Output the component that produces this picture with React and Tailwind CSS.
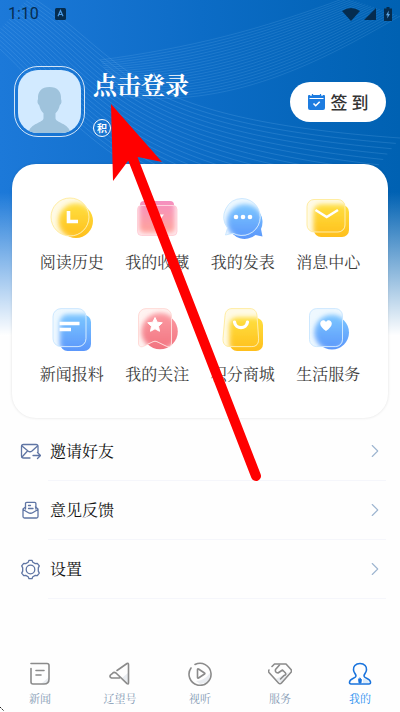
import { Fragment } from 'react';
import { ChevronRight } from 'lucide-react';

const range = (n) => Array.from({ length: n }, (_, i) => i);

// every wave is a blend between the first and the last curve of its family
const waveFamilies = [
  { count: 20, from: [30, -4, 130, 60, 120, 118, 400, 138], to: [-10, 40, 70, 110, 90, 180, 320, 240], opacity: 0.18 },
  { count: 20, from: [100, 60, 190, 48, 260, 30, 345, -2], to: [120, 96, 230, 110, 320, 62, 400, 16], opacity: 0.15 },
];

function wavePath(from, to, t) {
  const p = from.map((v, i) => Math.round((v + (to[i] - v) * t) * 10) / 10);
  return `M${p[0]} ${p[1]}C${p[2]} ${p[3]} ${p[4]} ${p[5]} ${p[6]} ${p[7]}`;
}

const tones = {
  yellow: { top: '#ffdf3f', bottom: '#ffbf1c', glass: '#fffae6', edge: '#ffe98f' },
  pink: { top: '#f590c0', bottom: '#ffa39a', glass: '#ffe9ee', edge: '#ffc9d2' },
  red: { top: '#fb9aa2', bottom: '#f27480', glass: '#fff3f1', edge: '#ffd3cf' },
  blue: { top: '#7cc6ff', bottom: '#5b97fb', glass: '#eef8ff', edge: '#c3e3ff' },
};

const services = [
  {
    id: 'history', label: '阅读历史', tone: 'yellow',
    back: <circle cx="28" cy="25" r="17" />,
    front: <circle cx="22" cy="21" r="19" />,
    glyph: <path d="M20.5 15v10.5H30" fill="none" stroke="#fff" strokeWidth="3.6" />,
  },
  {
    id: 'favorites', label: '我的收藏', tone: 'pink',
    back: <rect x="7" y="5" width="34" height="31" rx="4" />,
    front: <rect x="4.5" y="9.5" width="39.5" height="30" rx="4" />,
    glyph: <path d="M18.500 18.500h12.500l-6.200 8z" fill="#fff" />,
  },
  {
    id: 'posts', label: '我的发表', tone: 'blue',
    back: <path d="M27 9a17 17 0 0 1 15 24l1.500 7.500-7-1.500A17 17 0 1 1 27 9z" />,
    front: <path d="M23 2.500a18.500 18.500 0 1 1-9 34.800L6.500 39l2-7A18.500 18.500 0 0 1 23 2.500z" />,
    glyph: <g fill="#fff"><circle cx="17" cy="21" r="2.300" /><circle cx="24" cy="21" r="2.300" /><circle cx="31" cy="21" r="2.300" /></g>,
  },
  {
    id: 'messages', label: '消息中心', tone: 'yellow',
    back: <rect x="10" y="9" width="35" height="32" rx="7" />,
    front: <rect x="3" y="3.5" width="38" height="32.5" rx="7" />,
    glyph: <path d="M11.500 14l11.200 7L34 14" fill="none" stroke="#fff" strokeWidth="2.600" />,
  },
  {
    id: 'tips', label: '新闻报料', tone: 'blue',
    back: <rect x="12.5" y="7" width="30.500" height="36" rx="7" />,
    front: <rect x="5" y="0.600" width="33" height="38" rx="8" />,
    glyph: <path d="M11.500 15.500h20M11.500 21.500H23" fill="none" stroke="#fff" strokeWidth="3.300" />,
  },
  {
    id: 'follows', label: '我的关注', tone: 'red',
    back: <circle cx="27" cy="23.500" r="17.800" />,
    front: <path d="M13 .6h18a7.500 7.500 0 0 1 7.500 7.500v27c0 3-2 4.500-5 3.200l-9.500-4.600q-2-1-4 0l-9.500 4.600c-3 1.300-5-.2-5-3.200v-27A7.500 7.500 0 0 1 13 .6z" />,
    glyph: <path d="M22 9.500l2.200 4.700 5.100.6-3.800 3.500 1 5-4.500-2.500-4.500 2.500 1-5-3.800-3.500 5.100-.6z" fill="#fff" stroke="#fff" strokeLinejoin="round" />,
  },
  {
    id: 'points', label: '积分商城', tone: 'yellow',
    back: <rect x="11" y="10" width="33" height="33" rx="7" />,
    front: <path d="M13 .6h18c4 0 6.600 2.600 7 7l1.600 23c.2 5-2 8-7 8H11c-5 0-7.200-3-7-8l2-23c.4-4.400 3-7 7-7z" />,
    glyph: <path d="M15.500 14c1 7.500 12 7.500 13 0" fill="none" stroke="#fff" strokeWidth="3.200" strokeLinecap="round" />,
  },
  {
    id: 'life', label: '生活服务', tone: 'blue',
    back: <circle cx="28" cy="24.500" r="17" />,
    front: <rect x="5.500" y="0.600" width="33" height="38" rx="7" />,
    glyph: <path d="M22 23c-3.500-2.600-5.800-4.800-5.800-7.300 0-3.500 4.200-4.600 5.800-1.700 1.600-2.900 5.800-1.800 5.800 1.700 0 2.500-2.300 4.700-5.800 7.300z" fill="#fff" />,
  },
];

function GlassIcon({ id, tone, back, front, glyph }) {
  const { top, bottom, glass, edge } = tones[tone];
  return (
    <svg viewBox="0 0 48 48" className="size-12" aria-hidden="true">
      <defs>
        <linearGradient id={`${id}-fill`} x1="0" y1="0" x2="0" y2="1">
          <stop offset="0" stopColor={top} />
          <stop offset="1" stopColor={bottom} />
        </linearGradient>
        <filter id={`${id}-blur`} x="-30%" y="-30%" width="160%" height="160%">
          <feGaussianBlur stdDeviation="2.6" />
        </filter>
        <clipPath id={`${id}-front`}>{front}</clipPath>
        <clipPath id={`${id}-back`}>{back}</clipPath>
      </defs>
      <g fill={`url(#${id}-fill)`}>{back}</g>
      <g clipPath={`url(#${id}-front)`}>
        <rect width="48" height="48" fill={glass} />
        <g fill={`url(#${id}-fill)`} filter={`url(#${id}-blur)`}>{back}</g>
        <g fill={`url(#${id}-fill)`} fillOpacity="0.4" filter={`url(#${id}-blur)`}>{back}</g>
      </g>
      <g fill="none" stroke={edge} strokeOpacity="0.8">{front}</g>
      <g fill="none" stroke="#fff" strokeOpacity="0.3" clipPath={`url(#${id}-back)`}>{front}</g>
      {glyph}
    </svg>
  );
}

const menuItems = [
  {
    label: '邀请好友',
    icon: (
      <>
        <path d="M10 17H3.500Q1.500 17 1.500 15V5.500Q1.500 3.500 3.500 3.500h12.500q2 0 2 2V11" />
        <path d="M2 5l6 5q2 1.500 4 0l5.500-5M2 16l5-5.500M13 14.500h7M17.500 11.500l3 3-3 3" />
      </>
    ),
  },
  {
    label: '意见反馈',
    icon: (
      <>
        <path d="M5.500 9V3.500q0-1.200 1.200-1.200h8q1.200 0 1.200 1.200V9M8.500 5.500h2M8.500 8.500h4.500" />
        <path d="M5.500 7L3 9v7.500Q3 18 4.500 18h12q1.500 0 1.500-1.500V9l-2.500-2M3 9.500l5 3q2.500 1.500 5 0l5-3" />
      </>
    ),
  },
  {
    label: '设置',
    icon: (
      <>
        <circle cx="10.500" cy="10.500" r="4.300" />
        <path d="M8.200 3.200L9 1.300h3l.8 1.900 2.500 1.400 2-.3 2 2.600-1 2v3.200l1 2-2 2.600-2-.3-2.500 1.400-.8 1.900H9l-.8-1.900-2.500-1.400-2 .3-2-2.600 1-2V8.900l-1-2 2-2.600 2 .3z" />
      </>
    ),
  },
];

const tabs = [
  {
    label: '新闻',
    icon: (
      <>
        <path d="M13 23l8-7v5q0 2-2 2z" fill="#e9ecf0" stroke="none" />
        <path d="M3 2.500h16q2 0 2 2V18q0 5-5 5H5q-2 0-2-2V7.500M8 9.500h8M8 14h5" />
      </>
    ),
  },
  {
    label: '辽望号',
    icon: (
      <>
        <path d="M14 17l7-6v12z" fill="#e9ecf0" stroke="none" />
        <path d="M9 9.500l10-7q1.500-.8 1.500 1v18.500q0 1.500-1.500.6L8 12q-2-1.300-3.500.3L2.500 14q-1.500 2.200 1 3h8" />
      </>
    ),
  },
  {
    label: '视听',
    icon: (
      <>
        <path d="M8 20q8 0 14-8 1 10-10 11z" fill="#e9ecf0" stroke="none" />
        <path d="M7 3.500A11 11 0 1 1 3 7M9.500 8.500v8q0 1 1 .5l6-4q.8-.5 0-1l-6-4q-1-.5-1 .5z" />
      </>
    ),
  },
  {
    label: '服务',
    icon: (
      <>
        <path d="M8 18l13-7-8 11z" fill="#e9ecf0" stroke="none" />
        <path d="M4 5.500L6.500 3H18l5 5.500q1 1.500 0 2.800L13.500 22q-1.500 1.500-3 0L1 11.500q-1-1.500 0-2.500" />
        <path d="M11.500 4L7.500 8.500q-.8 3 2.500 3.500l4.500-3 3 3q1 2-1.500 2.500L12.500 18" />
      </>
    ),
  },
  {
    label: '我的',
    active: true,
    icon: (
      <>
        <path d="M15 17.500q5 0 6 4.500h-6z" fill="#dcebfa" stroke="none" />
        <path d="M12 2.500c4.500 0 7 3 6.500 6.500-.3 3-2.500 4-2.500 6 0 2.500 6 2 6.500 6 .1 1.500-.5 2-1.500 2H3c-1 0-1.600-.5-1.500-2 .5-4 6.500-3.500 6.500-6 0-2-2.200-3-2.500-6C5 5.500 7.500 2.500 12 2.500z" />
        <path d="M12 17l1.500 1.500L13 22h-2l-.5-3.500z" fill="currentColor" strokeWidth="0.8" />
      </>
    ),
  },
];

function StatusBar() {
  return (
    <div className="flex h-7 items-center justify-between px-2 text-[#052c4f]">
      <div className="flex items-center gap-4">
        <span className="font-[Roboto] text-base leading-none">1:10</span>
        <svg viewBox="0 0 11 12" className="h-3 w-[11px]" aria-hidden="true">
          <rect width="11" height="12" rx="1.500" fill="currentColor" />
          <path d="M3 8.300l2.500-5.800L8 8.300M4 6.500h3" fill="none" stroke="#4c9be6" strokeWidth="1.200" />
        </svg>
      </div>
      <div className="flex items-center gap-1">
        <svg viewBox="0 0 18 13" className="h-[13px] w-[18px]" fill="currentColor" aria-hidden="true">
          <path d="M0 3q9-6 18 0L9 13z" />
        </svg>
        <svg viewBox="0 0 12 12" className="mr-1 size-3" fill="currentColor" aria-hidden="true">
          <path d="M12 0v12H0z" />
        </svg>
        <svg viewBox="0 0 8 14" className="h-3.5 w-2" aria-hidden="true">
          <path d="M2.500 0h3v1.500H8V14H0V1.500h2.500z" fill="currentColor" />
          <path d="M4.800 3.500L2 8.200h1.600L3.200 11.500 6 7H4.400z" fill="#5aa5e4" />
        </svg>
      </div>
    </div>
  );
}

function Backdrop() {
  return (
    <div className="absolute inset-x-0 top-0 h-[336px] overflow-hidden bg-linear-to-r from-[#1c79d9] via-[#0c6cc6] to-[#0061b2]">
      <svg viewBox="0 0 400 180" className="w-full" fill="none" stroke="#8cc6f8" aria-hidden="true">
        {waveFamilies.map(({ count, from, to, opacity }, f) => (
          <Fragment key={f}>
            {range(count).map((i) => (
              <path key={i} d={wavePath(from, to, i / (count - 1))} strokeOpacity={opacity} />
            ))}
          </Fragment>
        ))}
      </svg>
      <div className="absolute inset-x-0 bottom-0 h-36 bg-linear-to-b from-transparent to-white" />
    </div>
  );
}

function Profile() {
  return (
    <section className="flex items-start justify-between px-3.5 pt-[38px]">
      <div className="flex gap-2">
        <div className="size-[71px] rounded-3xl border border-white/80 p-[3px]">
          <svg viewBox="0 0 63 63" className="size-full rounded-[20px] bg-[#d2eaff]" fill="#9fc3dc" aria-hidden="true">
            <path d="M31.500 17c8 0 12 4.500 11.500 12 1 2 .5 5-1.200 6.200-.8 3.800-2.300 6.300-4.300 8V48c0 5 13.500 5 15 15h-42c1.500-10 15-10 15-15v-4.800c-2-1.700-3.500-4.200-4.300-8C19.500 34 19 31 20 29c-.5-7.500 3.500-12 11.500-12z" />
          </svg>
        </div>
        <div className="flex flex-col items-start justify-between pt-0.5">
          <button type="button" className="text-2xl leading-8 font-bold text-white">点击登录</button>
          <span className="flex size-[18px] items-center justify-center rounded-full border border-white font-['Noto_Sans_CJK_SC',sans-serif] text-[10px] leading-none font-bold text-white">积</span>
        </div>
      </div>
      <button type="button" className="mt-4 flex h-10 w-24 items-center justify-center gap-1.5 rounded-full bg-white font-['Noto_Sans_CJK_SC',sans-serif] text-[17px] font-medium text-[#333]">
        <svg viewBox="0 0 17 16" className="h-4 w-[17px]" fill="none" aria-hidden="true">
          <path d="M0 2q0-1 1-1h15q1 0 1 1v12q0 2-2 2H2q-2 0-2-2z" fill="#1d7ce0" />
          <path d="M1.500 4.500h14M3 0v2M14 0v2" stroke="#fff" strokeWidth="1.200" />
          <path d="M4.500 0v2.500M12.500 0v2.500" stroke="#1d7ce0" strokeWidth="1.200" />
          <path d="M5.500 9.500l2.200 2.200 4-4" stroke="#fff" strokeWidth="1.600" />
        </svg>
        签 到
      </button>
    </section>
  );
}

function ServiceCard() {
  return (
    <section className="mx-3 mt-[27px] grid grid-cols-4 gap-y-[34px] rounded-3xl bg-white px-[17px] py-8 shadow-[0_0_3px_rgba(0,0,0,0.12)]">
      {services.map((item) => (
        <button key={item.id} type="button" className="flex flex-col items-center gap-1.5 text-base leading-6 whitespace-nowrap text-[#3c3c3c]">
          <GlassIcon {...item} />
          {item.label}
        </button>
      ))}
    </section>
  );
}

function Menu() {
  return (
    <ul className="mt-1">
      {menuItems.map(({ label, icon }) => (
        <li key={label}>
          <button type="button" className="flex h-[59px] w-full items-center pr-3.5 pl-5">
            <svg viewBox="0 0 21 21" className="size-[21px]" fill="none" stroke="#5f75a4" strokeWidth="1.300" strokeLinecap="round" strokeLinejoin="round" aria-hidden="true">
              {icon}
            </svg>
            <span className="ml-[7px] flex h-full flex-1 items-center justify-between border-b border-[#f5f6fb] pl-0.5 text-base text-[#111]">
              {label}
              <ChevronRight size={22} strokeWidth={1.2} className="text-[#9db5d0]" />
            </span>
          </button>
        </li>
      ))}
    </ul>
  );
}

function TabBar() {
  return (
    <nav className="mt-auto flex pb-1.5">
      {tabs.map(({ label, icon, active }) => (
        <a key={label} href="#" aria-current={active ? 'page' : undefined} className="flex flex-1 flex-col items-center gap-1">
          <svg viewBox="0 0 24 25" className={active ? 'h-[25px] w-6 text-[#1a74dd]' : 'h-[25px] w-6 text-[#8b8b8b]'} fill="none" stroke="currentColor" strokeWidth="1.600" strokeLinecap="round" strokeLinejoin="round" aria-hidden="true">
            {icon}
          </svg>
          <span className={active ? 'text-[11px] leading-4 text-[#2b8ff0]' : 'text-[11px] leading-4 text-[#8299b3]'}>{label}</span>
        </a>
      ))}
    </nav>
  );
}

export default function App() {
  return (
    <div className="relative flex min-h-screen flex-col bg-[#fefefe] font-['Noto_Serif_CJK_SC','Noto_Sans_CJK_SC',serif]">
      <Backdrop />
      <div className="relative flex flex-1 flex-col">
        <StatusBar />
        <Profile />
        <ServiceCard />
        <Menu />
        <TabBar />
      </div>
      <svg viewBox="0 0 160 390" className="pointer-events-none absolute top-[100px] left-[105px] h-[390px] w-40" aria-hidden="true">
        <path d="M28 59L151 376" stroke="#f00" strokeWidth="10" strokeLinecap="round" />
        <path d="M6 4l51 58-24-5-10 4L8 81z" fill="#f00" />
      </svg>
      <svg viewBox="0 0 5 6" className="absolute bottom-0 left-0 h-1.5 w-[5px]" aria-hidden="true">
        <path d="M0 1l4 4" stroke="#222" strokeDasharray="2 1" />
      </svg>
    </div>
  );
}
